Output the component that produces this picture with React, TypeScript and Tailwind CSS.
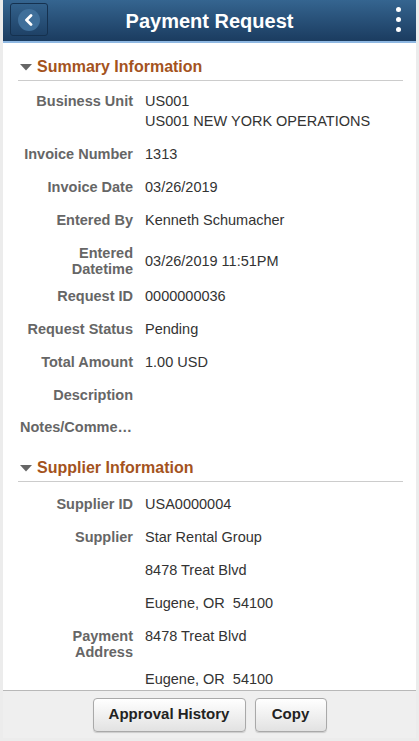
import { FunctionComponent, ReactNode } from "react";

type RowProps = {
  label: ReactNode;
  children?: ReactNode;
  twoLine?: boolean;
  pb?: string;
};

const Row: FunctionComponent<RowProps> = ({ label, children, twoLine, pb }) => {
  return (
    <div className={`flex items-start pt-[7px] ${pb ?? "pb-[6px]"}`}>
      <div className="w-[131px] shrink-0 pr-[1px] text-right font-bold text-[#666666] leading-4 mt-[2px]">
        {label}
      </div>
      <div className={`pl-[11px] text-[#333333] leading-5 ${twoLine ? "mt-[8px]" : ""}`}>
        {children}
      </div>
    </div>
  );
};

const SectionHeader: FunctionComponent<{ title: string }> = ({ title }) => {
  return (
    <div className="ml-[15px] mr-[13px] flex items-center gap-[5px] border-b border-[#cccccc] pb-[3px] pl-[2px]">
      <svg width="12" height="7" viewBox="0 0 12 7" className="mt-[1px]">
        <polygon points="0,0 12,0 6,6.5" fill="#666666" />
      </svg>
      <span className="text-[16px] font-bold text-[#a4531d] leading-5">{title}</span>
    </div>
  );
};

const App: FunctionComponent = () => {
  return (
    <div className="flex h-[741px] w-[419px] flex-col overflow-hidden border-x-[3px] border-b-[3px] border-[#ececec] bg-white text-[14.5px] font-['Liberation_Sans',Arial,sans-serif]">
      <header className="relative flex h-[43px] shrink-0 items-center justify-center border-b-2 border-[#8fb8e2] bg-gradient-to-b from-[#356590] to-[#1b3c60]">
        <button className="absolute left-[7px] top-[3px] flex h-[33px] w-[38px] items-center justify-center rounded-[3px] border border-[#15314f] bg-transparent">
          <span className="flex h-[22px] w-[22px] items-center justify-center rounded-full bg-[#3f6f9a]">
            <svg width="10" height="12" viewBox="0 0 10 12">
              <path d="M7 1.5 L2.5 6 L7 10.5" stroke="white" strokeWidth="2.8" fill="none" strokeLinecap="round" strokeLinejoin="round" />
            </svg>
          </span>
        </button>
        <h1 className="text-[20px] font-bold text-white">Payment Request</h1>
        <div className="absolute right-[15px] top-[7px] flex flex-col gap-[5px]">
          <span className="h-[5px] w-[5px] rounded-full bg-white" />
          <span className="h-[5px] w-[5px] rounded-full bg-white" />
          <span className="h-[5px] w-[5px] rounded-full bg-white" />
        </div>
      </header>

      <main className="flex-1 overflow-hidden pt-[14px]">
        <SectionHeader title="Summary Information" />
        <div className="pt-[3px]">
          <Row label="Business Unit">
            <div>US001</div>
            <div>US001 NEW YORK OPERATIONS</div>
          </Row>
          <Row label="Invoice Number">1313</Row>
          <Row label="Invoice Date">03/26/2019</Row>
          <Row label="Entered By">Kenneth Schumacher</Row>
          <Row label={<>Entered<br />Datetime</>} twoLine pb="pb-[2px]">
            03/26/2019 11:51PM
          </Row>
          <Row label="Request ID">0000000036</Row>
          <Row label="Request Status">Pending</Row>
          <Row label="Total Amount">1.00 USD</Row>
          <Row label="Description">{"\u00a0"}</Row>
          <div className="flex pt-[6px] pb-[6px]">
            <div className="w-[133px] truncate pl-[17px] font-bold text-[#666666] leading-5">
              Notes/Comments
            </div>
          </div>
        </div>

        <div className="pt-[15px]">
          <SectionHeader title="Supplier Information" />
        </div>
        <div className="pt-[5px]">
          <Row label="Supplier ID">USA0000004</Row>
          <Row label="Supplier">Star Rental Group</Row>
          <Row label="">8478 Treat Blvd</Row>
          <Row label="">Eugene, OR&nbsp; 54100</Row>
          <Row label={<>Payment<br />Address</>} pb="pb-[2px]">
            8478 Treat Blvd
          </Row>
          <Row label="">Eugene, OR&nbsp; 54100</Row>
        </div>
      </main>

      <footer className="flex h-[48px] shrink-0 items-center justify-center gap-[9px] border-t border-[#b8b8b8] bg-[#efefef]">
        <button className="h-[34px] w-[153px] rounded-[4px] border border-[#a9a9a9] bg-gradient-to-b from-white to-[#e2e2e2] text-[15px] font-bold text-[#222222] shadow-[0_1px_1px_rgba(0,0,0,0.15)]">
          Approval History
        </button>
        <button className="h-[34px] w-[72px] rounded-[4px] border border-[#a9a9a9] bg-gradient-to-b from-white to-[#e2e2e2] text-[15px] font-bold text-[#222222] shadow-[0_1px_1px_rgba(0,0,0,0.15)]">
          Copy
        </button>
      </footer>
    </div>
  );
};

export default App;
